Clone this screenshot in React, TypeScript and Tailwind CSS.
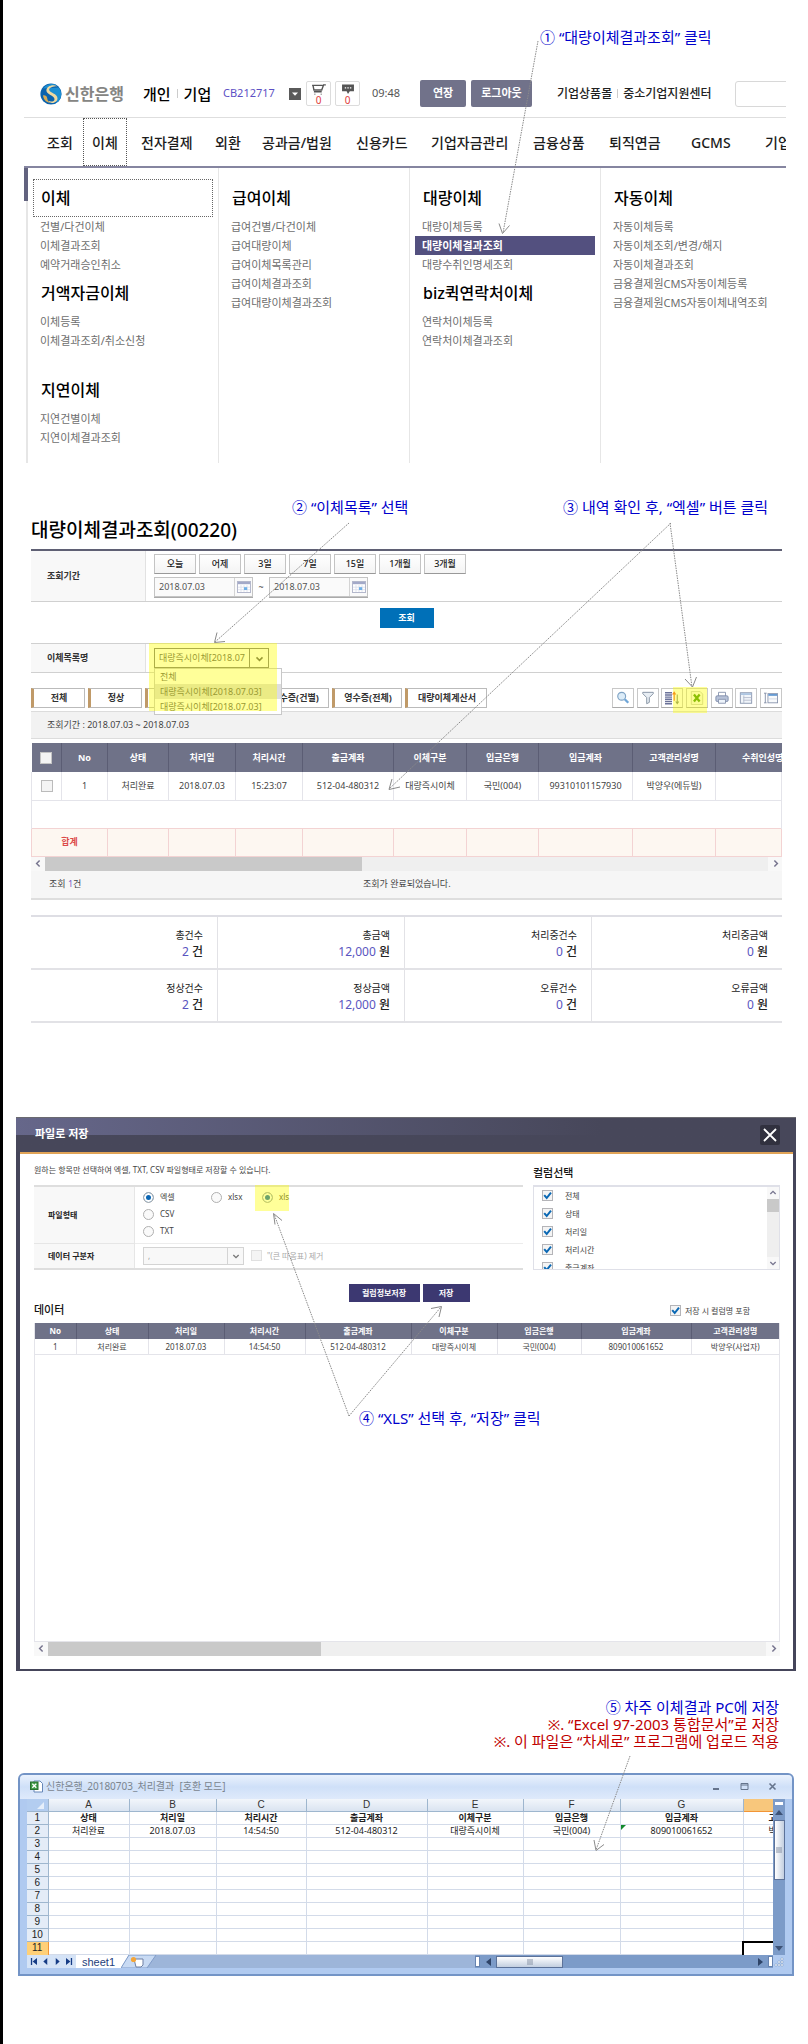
import type { ReactNode } from "react";

const menuColumns: { title: string; boxed?: boolean; items: string[]; active?: string }[][] = [
  [
    { title: "이체", boxed: true, items: ["건별/다건이체", "이체결과조회", "예약거래승인취소"] },
    { title: "거액자금이체", items: ["이체등록", "이체결과조회/취소신청"] },
    { title: "지연이체", items: ["지연건별이체", "지연이체결과조회"] },
  ],
  [
    {
      title: "급여이체",
      items: ["급여건별/다건이체", "급여대량이체", "급여이체목록관리", "급여이체결과조회", "급여대량이체결과조회"],
    },
  ],
  [
    { title: "대량이체", items: ["대량이체등록", "대량이체결과조회", "대량수취인명세조회"], active: "대량이체결과조회" },
    { title: "biz퀵연락처이체", items: ["연락처이체등록", "연락처이체결과조회"] },
  ],
  [
    {
      title: "자동이체",
      items: ["자동이체등록", "자동이체조회/변경/해지", "자동이체결과조회", "금융결제원CMS자동이체등록", "금융결제원CMS자동이체내역조회"],
    },
  ],
];

const navItems = ["조회", "이체", "전자결제", "외환", "공과금/법원", "신용카드", "기업자금관리", "금융상품", "퇴직연금", "GCMS", "기업"];

function Step({ n, children }: { n: string; children: ReactNode }) {
  return (
    <p className="text-[15px] leading-5 whitespace-nowrap text-[#0000cc]">
      {n} {children}
    </p>
  );
}

function Chevron({ dir, className }: { dir: "left" | "right" | "up" | "down"; className: string }) {
  const d = {
    left: "M7.5 2 3.5 6l4 4",
    right: "M4.5 2l4 4-4 4",
    up: "M2 7.5l4-4 4 4",
    down: "M2 4.5l4 4 4-4",
  }[dir];
  return (
    <svg viewBox="0 0 12 12" className={className} fill="none" stroke="currentColor" strokeWidth="2" aria-hidden="true">
      <path d={d} />
    </svg>
  );
}

function Check({ label, className, textClass }: { label: string; className: string; textClass: string }) {
  return (
    <label className={className}>
      <span className="relative block size-[11px] shrink-0">
        <input type="checkbox" defaultChecked className="block size-[11px] appearance-none border border-[#b4b4b8] bg-[#f4f4f4]" />
        <svg viewBox="0 0 11 11" className="pointer-events-none absolute inset-0 size-[11px]" fill="none" stroke="#0a68b4" strokeWidth="2" aria-hidden="true">
          <path d="M2.2 5.2 4.7 8 9 2.6" />
        </svg>
      </span>
      <span className={textClass}>{label}</span>
    </label>
  );
}

function Radio({ label, name, checked }: { label: string; name: string; checked?: boolean }) {
  return (
    <label className="flex h-[17px] items-center gap-[6px]">
      <input
        type="radio"
        name={name}
        defaultChecked={checked}
        className="size-[11px] appearance-none rounded-full border border-[#b0b0b0] bg-[#fafafa] checked:bg-[#0a66b4] checked:shadow-[inset_0_0_0_2px_white]"
      />
      <span>{label}</span>
    </label>
  );
}

function HScroll({ thumb }: { thumb: string }) {
  return (
    <div className="flex h-[14px] bg-[#efefef] text-[#77758f]">
      <span className="grid w-[14px] place-items-center bg-[#f8f8f8]">
        <Chevron dir="left" className="size-[9px]" />
      </span>
      <span className={thumb} />
      <span className="ml-auto grid w-[14px] place-items-center bg-[#f8f8f8]">
        <Chevron dir="right" className="size-[9px]" />
      </span>
    </div>
  );
}

function DateField({ label }: { label: string }) {
  return (
    <div className="flex h-5 w-[99px] border border-[#c4c4c4] bg-[#fafafa] shadow-[0_1px_0_#aaa]">
      <input aria-label={label} defaultValue="2018.07.03" className="w-[79px] min-w-0 bg-transparent pl-1 text-[9px] text-[#555] outline-none" />
      <span className="grid flex-1 place-items-center border-l border-[#d4d4d4] bg-[#fafafa]">
        <svg viewBox="0 0 14 12" className="h-3 w-[14px]" aria-hidden="true">
          <rect x=".5" y=".5" width="13" height="11" fill="#fff" stroke="#b4b8cc" />
          <rect x="1" y="1" width="12" height="2.2" fill="#a3a9c8" />
          <path d="M4 4v7M7 4v7M10 4v7M1 6.2h12M1 8.7h12" stroke="#d5dae8" strokeWidth=".7" />
          <rect x="7" y="6.2" width="3.200" height="2.800" fill="#6fb0e6" />
        </svg>
      </span>
    </div>
  );
}

function Header() {
  return (
    <header className="mt-[33px] mr-[22px] ml-[21px] overflow-hidden">
      <div className="grid grid-cols-[103px_80px_66px_83px_48px_137px_178px_1fr] items-center border-b border-[#dedede] pb-[10px] pl-4 whitespace-nowrap">
        <a href="#home" className="flex items-center gap-[3px]">
          <svg viewBox="0 0 22 22" className="size-[22px]" aria-hidden="true">
            <circle cx="11" cy="11" r="10.6" fill="#0b62ad" />
            <path d="M3 5.500A10.600 10.600 0 0 1 17 2.300C12 1.500 7 5 9 8.500c2 3 8 4 8 8.200 0 2-1.500 3.600-3 4.300 8-2.500 9-12 4.500-16.500" fill="#1c8fd3" />
            <path d="M17.200 3.200C12.500.8 6.300 3.500 6.400 7.500c.1 4.300 7.800 4.800 8.100 8.400.2 2.600-3.600 3.500-6.200 1.900 1.500 3.600 9 2.600 9.200-2.300.2-5-8.200-5.500-8.400-8.700-.1-2.300 4.400-3.700 8.100-3.600z" fill="#f0d9a0" />
            <path d="M3 12.500c2-.6 4 .8 4.200 2.800.3 2 1.200 3.600 3.400 4.600-3.700-.2-6.800-2.600-7.600-7.400z" fill="#d9ab55" />
          </svg>
          <span className="text-[16px] leading-5 font-bold text-[#858583]">신한은행</span>
        </a>
        <div className="flex items-center gap-[6px] text-[15px] leading-5 font-medium text-black">
          <a href="#personal">개인</a>
          <span className="h-[9px] w-px bg-[#ccc]" />
          <a href="#corporate">기업</a>
        </div>
        <span className="text-[11px] text-[#5c50c4]">CB212717</span>
        <div className="flex items-center">
          <button aria-label="계정 메뉴" className="mr-[5px] grid size-3 place-items-center bg-[#5a5a5a]">
            <svg viewBox="0 0 8 8" className="size-2" aria-hidden="true"><path d="M1 2.500h6L4 5.800z" fill="#fff" /></svg>
          </button>
          <button className="mr-1 flex h-[25px] w-[25px] flex-col items-center rounded-[2px] border border-[#dcdcdc] pt-[2px] text-[10px] leading-[10px] text-[#e03c3c]">
            <svg viewBox="0 0 16 12" className="h-[11px] w-[15px] shrink-0" fill="none" stroke="#555" strokeWidth="1.500" aria-hidden="true">
              <path d="M1 1.500h11.500M2 1.500l1 5h8.500L13.500 1H16M3 8.500h8.500M4 10.500v1M11 10.500v1" />
            </svg>
            0
          </button>
          <button className="flex h-[25px] w-[25px] flex-col items-center rounded-[2px] border border-[#dcdcdc] pt-[2px] text-[10px] leading-[10px] text-[#e03c3c]">
            <svg viewBox="0 0 15 12" className="h-[11px] w-[14px] shrink-0" aria-hidden="true">
              <path d="M1 .5h13v7.500H9.500L7.500 11 6 8H1z" fill="#555" />
              <path d="M4 3.500h1.500v1.500H4zM6.800 3.500h1.500v1.500H6.800zM9.600 3.500h1.500v1.500H9.600z" fill="#fff" />
            </svg>
            0
          </button>
        </div>
        <time className="text-[11px] text-[#555]">09:48</time>
        <div className="flex gap-[5px] text-[11px] font-bold text-white">
          <button className="h-[27px] w-[46px] rounded-[2px] bg-[#71728a]">연장</button>
          <button className="h-[27px] w-[61px] rounded-[2px] bg-[#71728a]">로그아웃</button>
        </div>
        <div className="flex items-center gap-[5px] text-[12px] font-medium text-[#222]">
          <a href="#mall">기업상품몰</a>
          <span className="h-[9px] w-px bg-[#ccc]" />
          <a href="#support">중소기업지원센터</a>
        </div>
        <input aria-label="검색" className="h-[26px] w-[120px] rounded-[3px] border border-[#d8d8d8] bg-white outline-none" />
      </div>
      <nav className="grid grid-cols-[45px_49px_74px_47px_94px_75px_102px_76px_82px_74px_1fr] border-b-2 border-[#8585a0] pl-[14px] text-[14px] font-medium whitespace-nowrap text-[#1c1c1c]">
        {navItems.map((item) => (
          <a
            key={item}
            href="#menu"
            className={
              item === "이체"
                ? "flex h-12 items-center justify-self-start border border-dotted border-[#555] px-2"
                : "flex h-12 items-center justify-self-start border border-transparent px-2"
            }
          >
            {item}
          </a>
        ))}
      </nav>
      <div className="flex min-h-[295px]">
        <div className="flex w-1 shrink-0 flex-col">
          <span className="h-[33px] bg-[#62637f]" />
          <span className="ml-[2px] flex-1 bg-[#e6e6e6]" />
        </div>
        <div className="grid flex-1 grid-cols-[191px_191px_191px_1fr]">
          {menuColumns.map((groups, i) => (
            <div key={i} className="border-r border-[#e6e6e6] px-[5px] pt-[11px] last:border-r-0">
              {groups.map((g, j) => (
                <section key={g.title} className={j === 2 ? "mt-[21px]" : ""}>
                  <h2
                    className={
                      g.boxed
                        ? "flex h-[38px] items-center border border-dotted border-[#666] px-[7px] text-[16px] font-medium text-black"
                        : "flex h-[38px] items-center border border-transparent px-[7px] text-[16px] font-medium whitespace-nowrap text-black"
                    }
                  >
                    {g.title}
                  </h2>
                  <ul>
                    {g.items.map((item) => (
                      <li key={item}>
                        <a
                          href="#item"
                          className={
                            item === g.active
                              ? "block h-[19px] bg-[#53507f] px-[7px] text-[11px] leading-[19px] font-bold whitespace-nowrap text-white"
                              : "block h-[19px] px-[7px] text-[11px] leading-[19px] whitespace-nowrap text-[#6e6e6e]"
                          }
                        >
                          {item}
                        </a>
                      </li>
                    ))}
                  </ul>
                </section>
              ))}
            </div>
          ))}
        </div>
      </div>
    </header>
  );
}

const toolIcons: { label: string; art: ReactNode }[] = [
  {
    label: "검색",
    art: (
      <>
        <circle cx="6.500" cy="6" r="4.500" fill="#dcecf8" stroke="#7fa3c4" strokeWidth="1.300" />
        <path d="M10 9.500l4 4" stroke="#6fa6d8" strokeWidth="2.600" />
      </>
    ),
  },
  { label: "필터", art: <path d="M2 1.500h12v1.500L9.500 7.500V13l-3 1.500v-7L2 3z" fill="#e8eef4" stroke="#7d8a9c" /> },
  {
    label: "정렬",
    art: (
      <>
        <path d="M0 2h8M0 4.500h8M0 7h8M0 9.500h8M0 12h8M0 14.500h8" stroke="#6b7299" strokeWidth="1.600" />
        <path d="M10.500 11V2M8.800 4l1.700-2.500L12.200 4" stroke="#ee5a2a" strokeWidth="1.300" fill="none" />
        <path d="M14 4v10M12.300 12l1.700 2.500 1.700-2.500" stroke="#7b8670" strokeWidth="1.200" fill="none" />
      </>
    ),
  },
  {
    label: "엑셀",
    art: (
      <>
        <path d="M1.500.5h10l3 3v12h-13z" fill="#f8faf4" stroke="#c2c9b8" />
        <path d="M4.500 4l6.500 8M11 4l-6.500 8" stroke="#3f9408" strokeWidth="2.600" />
      </>
    ),
  },
  {
    label: "인쇄",
    art: (
      <>
        <path d="M4 6V1.500h8V6" fill="#fff" stroke="#8591ab" />
        <rect x="1" y="5.500" width="14" height="6.500" rx="1.500" fill="#b7c2d8" stroke="#7b89a8" />
        <path d="M4 9.500h8v4.500H4z" fill="#eef4fb" stroke="#8591ab" />
      </>
    ),
  },
  {
    label: "표",
    art: (
      <>
        <rect x="1.500" y="2" width="13" height="12" fill="#f1f5fa" stroke="#8591ab" />
        <path d="M2 3.500h12" stroke="#a9c3e0" strokeWidth="2" />
        <path d="M5.500 5v9M5 7.500h9M5 10.500h9" stroke="#b4bccd" />
      </>
    ),
  },
  {
    label: "열 고정",
    art: (
      <>
        <path d="M0 2.500h3M0 13.500h3M1.500 2.500v11" stroke="#7f8aa4" />
        <rect x="4.500" y="3" width="11" height="10.500" fill="#f8fafc" stroke="#8591ab" />
        <path d="M5 4.500h10" stroke="#5d95d0" strokeWidth="2" />
        <path d="M5 9h10" stroke="#d0d6e0" />
      </>
    ),
  },
];

const listCols = ["w-[30px]", "w-[46px]", "w-[61px]", "w-[67px]", "w-[67px]", "w-[91px]", "w-[73px]", "w-[72px]", "w-[94px]", "w-[83px]", ""];
const listHead = ["No", "상태", "처리일", "처리시간", "출금계좌", "이체구분", "입금은행", "입금계좌", "고객관리성명"];
const listRow = ["1", "처리완료", "2018.07.03", "15:23:07", "512-04-480312", "대량즉시이체", "국민(004)", "99310101157930", "박양우(에듀빌)"];

const summary = [
  ["총건수", "2", "건"],
  ["총금액", "12,000", "원"],
  ["처리중건수", "0", "건"],
  ["처리중금액", "0", "원"],
  ["정상건수", "2", "건"],
  ["정상금액", "12,000", "원"],
  ["오류건수", "0", "건"],
  ["오류금액", "0", "원"],
];

function ResultPage() {
  return (
    <main className="mr-[26px] ml-7 text-[9px] whitespace-nowrap text-[#444]">
      <h1 className="text-[19px] leading-[26px] font-medium text-black">대량이체결과조회(00220)</h1>
      <section className="mt-[6px] grid grid-cols-[115px_1fr] border-t-2 border-b border-t-[#5f6074] border-b-[#d0d0d0]">
        <div className="flex items-center border-r border-[#e2e2e2] bg-[#f8f8f8] pl-4 font-bold text-[#333]">조회기간</div>
        <div className="flex flex-col gap-[3px] pt-[3px] pb-1 pl-2">
          <div className="flex gap-[3px]">
            {["오늘", "어제", "3일", "7일", "15일", "1개월", "3개월"].map((t) => (
              <button key={t} className="h-5 w-[42px] border border-[#c4c4c4] border-b-[#999] bg-linear-to-b from-white to-[#f4f4f4] font-medium text-[#222]">
                {t}
              </button>
            ))}
          </div>
          <div className="flex items-center">
            <DateField label="시작일" />
            <span className="w-4 text-center">~</span>
            <DateField label="종료일" />
          </div>
        </div>
      </section>
      <button className="mx-auto mt-[6px] block h-5 w-[54px] bg-[#0070b8] font-bold text-white">조회</button>
      <section className="mt-[15px] grid grid-cols-[115px_1fr] border-y border-[#d0d0d0]">
        <label htmlFor="list" className="flex items-center border-r border-[#e2e2e2] bg-[#f8f8f8] pl-4 font-bold text-[#333]">
          이체목록명
        </label>
        <div className="h-7 py-1 pl-2">
          <div className="relative h-5 w-[115px]">
            <select id="list" className="block h-5 w-[115px] appearance-none border border-[#777] bg-white pr-[23px] pl-1 text-[9px] text-[#555] outline-none">
              <option>대량즉시이체[2018.07.03]</option>
            </select>
            <span className="pointer-events-none absolute top-0 right-0 grid h-5 w-5 place-items-center border border-[#777] text-[#555]">
              <Chevron dir="down" className="size-[9px]" />
            </span>
            <ul className="absolute top-5 left-0 z-10 w-32 border border-[#c8c8c8] bg-white text-[#555]">
              <li className="h-[15px] pl-[5px] leading-[15px]">전체</li>
              <li className="h-[15px] bg-[#dedede] pl-[5px] leading-[15px]">대량즉시이체[2018.07.03]</li>
              <li className="h-[15px] pl-[5px] leading-[15px]">대량즉시이체[2018.07.03]</li>
            </ul>
            <div className="pointer-events-none absolute -top-[5px] -left-[5px] z-20 h-[68px] w-32 bg-[#ffff00]/40" />
          </div>
        </div>
      </section>
      <div className="mt-[15px] flex items-center justify-between">
        <div className="flex gap-[3px] font-bold text-[#333]">
          <button className="h-5 w-[54px] border border-l-3 border-[#bbb] border-l-[#c09a68]">전체</button>
          <button className="h-5 w-[54px] border border-l-3 border-[#bbb] border-l-[#c09a68]">정상</button>
          <button aria-label="오류" className="h-5 w-[54px] border border-l-3 border-[#bbb] border-l-[#c09a68]" />
          <button aria-label="처리중" className="h-5 w-[54px] border border-l-3 border-[#bbb] border-l-[#c09a68]" />
          <button className="h-5 w-[70px] border border-l-3 border-[#bbb] border-l-[#c09a68]">영수증(건별)</button>
          <button className="h-5 w-[70px] border border-l-3 border-[#bbb] border-l-[#c09a68]">영수증(전체)</button>
          <button className="h-5 w-[82px] border border-l-3 border-[#bbb] border-l-[#c09a68]">대량이체계산서</button>
        </div>
        <div className="relative flex w-[170px] justify-between">
          {toolIcons.map((t) => (
            <button key={t.label} aria-label={t.label} className="grid h-5 w-[22px] place-items-center border border-[#c8c8c8] border-b-[#aaa] bg-white">
              <svg viewBox="0 0 16 16" className="size-[14px]" fill="none" aria-hidden="true">{t.art}</svg>
            </button>
          ))}
          <div className="pointer-events-none absolute -top-px left-[61px] z-10 h-[26px] w-[34px] bg-[#ffff00]/40" />
        </div>
      </div>
      <p className="mt-[3px] h-7 border-y border-[#dcdcdc] bg-[#f2f2f2] pl-4 leading-[26px]">조회기간 : 2018.07.03 ~ 2018.07.03</p>
      <table className="mt-1 w-full table-fixed border-collapse text-center">
        <colgroup>{listCols.map((c, i) => <col key={i} className={c} />)}</colgroup>
        <thead>
          <tr className="h-[29px] bg-[#6f7288] text-white">
            <th className="border-r border-[#5b5d74] p-0">
              <input type="checkbox" aria-label="전체 선택" className="mx-auto block size-3 appearance-none border border-[#c4c4c4] bg-[#f4f4f4]" />
            </th>
            {listHead.map((h) => <th key={h} className="border-r border-[#5b5d74] p-0 font-bold">{h}</th>)}
            <th className="overflow-hidden p-0 pl-[26px] text-left font-bold">수취인성명</th>
          </tr>
        </thead>
        <tbody>
          <tr className="h-7 border-b border-[#e4e4ea]">
            <td className="border-x border-[#e4e4ea] p-0">
              <input type="checkbox" aria-label="1번 선택" className="mx-auto block size-3 appearance-none border border-[#bbb] bg-[#f4f4f4]" />
            </td>
            {listRow.map((v) => <td key={v} className="border-r border-[#e4e4ea] p-0">{v}</td>)}
            <td className="border-r border-[#e4e4ea]" />
          </tr>
          <tr className="h-7 border-b border-[#e4e4ea]">
            <td colSpan={11} className="border-x border-[#e4e4ea]" />
          </tr>
          <tr className="h-7 bg-[#fdf7f1]">
            <td colSpan={2} className="border border-[#f3d3d3] p-0 font-bold text-[#dc4a4a]">합계</td>
            {listRow.map((v) => <td key={v} className="border border-[#f3d3d3]" />)}
          </tr>
        </tbody>
      </table>
      <HScroll thumb="w-[317px] bg-[#c9c9c9]" />
      <div className="grid h-[29px] grid-cols-[314px_1fr] items-center border-b-2 border-[#dedede] bg-[#f6f6f6] pl-[18px]">
        <span>조회 <span className="text-[#7a5cc8]">1</span>건</span>
        <span>조회가 완료되었습니다.</span>
      </div>
      <dl className="mt-[15px] grid grid-cols-[187px_187px_187px_1fr] border-t-2 border-[#dedee4]">
        {summary.map(([label, value, unit]) => (
          <div key={label} className="h-[53px] border-r border-b-2 border-[#e2e2e6] pt-[10px] pr-[14px] text-right nth-[4n]:border-r-0">
            <dt className="text-[10px] leading-4 text-[#222]">{label}</dt>
            <dd className="text-[12px] leading-[18px] font-medium text-[#222]">
              <span className="font-normal text-[#5a55c0]">{value}</span> {unit}
            </dd>
          </div>
        ))}
      </dl>
    </main>
  );
}

const saveCols = ["w-[41px]", "w-[72px]", "w-[76px]", "w-[81px]", "w-[106px]", "w-[86px]", "w-[84px]", "w-[110px]", ""];
const saveRow = ["1", "처리완료", "2018.07.03", "14:54:50", "512-04-480312", "대량즉시이체", "국민(004)", "809010061652", "박양우(사업자)"];

function SaveDialog() {
  return (
    <section className="mt-[94px] mr-3 ml-[13px] text-[8px] whitespace-nowrap text-[#444]">
      <header className="border-t border-[#6a6a70] bg-linear-to-r from-[#66678a] to-[#47475a] to-75%">
        <div className="flex h-[34px] items-center justify-between bg-linear-to-b from-transparent from-50% to-[#47475a] to-50% pr-4 pl-[19px]">
          <h2 className="text-[11px] font-bold text-white">파일로 저장</h2>
          <button aria-label="닫기" className="grid size-5 place-items-center rounded-[2px] bg-[#31313f]">
            <svg viewBox="0 0 20 20" className="size-5" stroke="#fff" strokeWidth="1.800" aria-hidden="true"><path d="M4 4l12 12M16 4L4 16" /></svg>
          </button>
        </div>
      </header>
      <div className="border-r-3 border-b-2 border-l-4 border-[#45455a]">
        <div className="border-t-2 border-[#e0a356] pr-[13px] pb-[13px] pl-[14px]">
          <div className="grid grid-cols-[1fr_247px] gap-[10px]">
            <div>
              <p className="flex h-[31px] items-center pt-[2px]">원하는 항목만 선택하여 엑셀, TXT, CSV 파일형태로 저장할 수 있습니다.</p>
              <div className="grid grid-cols-[101px_1fr] border-y-2 border-[#dedede]">
                <div className="flex items-center border-r border-b border-[#e6e6e6] bg-[#f8f8f8] pl-[14px] font-bold text-[#222]">파일형태</div>
                <div className="h-[57px] border-b border-[#ececec] pt-[2px] pl-2">
                  <div className="grid grid-cols-[68px_51px_1fr]">
                    <Radio label="엑셀" name="format" checked />
                    <Radio label="xlsx" name="excel" />
                    <div className="relative">
                      <Radio label="xls" name="excel" checked />
                      <div className="pointer-events-none absolute -top-[4px] -left-[7px] h-[26px] w-[34px] bg-[#ffff00]/40" />
                    </div>
                  </div>
                  <Radio label="CSV" name="format" />
                  <Radio label="TXT" name="format" />
                </div>
                <label htmlFor="sep" className="flex items-center border-r border-[#e6e6e6] bg-[#f8f8f8] pl-[14px] font-bold text-[#222]">
                  데이터 구분자
                </label>
                <div className="flex h-6 items-center gap-[7px] pl-2">
                  <div className="relative">
                    <select id="sep" disabled className="block h-[18px] w-[101px] appearance-none border border-[#d4d4d4] bg-[#f8f8f8] pl-1 text-[8px] text-[#999] opacity-100">
                      <option>,</option>
                    </select>
                    <span className="pointer-events-none absolute top-0 right-0 grid h-[18px] w-[17px] place-items-center border border-[#d4d4d4] text-[#777]">
                      <Chevron dir="down" className="size-2" />
                    </span>
                  </div>
                  <label className="flex items-center gap-[5px] text-[#aaa]">
                    <input type="checkbox" disabled className="size-[11px] appearance-none border border-[#e0e0e0] bg-[#f4f4f4]" />
                    <span>"(큰 따옴표) 제거</span>
                  </label>
                </div>
              </div>
            </div>
            <div>
              <h3 className="flex h-[31px] items-center pt-2 text-[11px] font-medium text-[#111]">컬럼선택</h3>
              <div className="flex h-[85px] overflow-hidden border border-t-2 border-[#dfe0e8]">
                <div className="flex-1 pl-2">
                  {["전체", "상태", "처리일", "처리시간", "출금계좌"].map((c) => (
                    <Check key={c} label={c} className="flex h-[18px] items-center gap-3" textClass="leading-[18px]" />
                  ))}
                </div>
                <div className="flex w-3 flex-col items-center bg-[#efefef] text-[#77758f]">
                  <span className="grid h-3 w-full place-items-center bg-[#f8f8f8]"><Chevron dir="up" className="size-2" /></span>
                  <span className="h-[13px] w-full bg-[#c9c9c9]" />
                  <span className="mt-auto grid h-3 w-full place-items-center bg-[#f8f8f8]"><Chevron dir="down" className="size-2" /></span>
                </div>
              </div>
            </div>
          </div>
          <div className="mt-[14px] flex justify-center gap-[3px] pl-1 font-bold text-white">
            <button className="h-[18px] w-[71px] bg-[#3c3871]">컬럼정보저장</button>
            <button className="h-[18px] w-[47px] bg-[#3c3871]">저장</button>
          </div>
          <div className="flex h-[21px] items-center justify-between pr-[30px] pb-[3px]">
            <h3 className="text-[11px] font-medium text-[#111]">데이터</h3>
            <Check label="저장 시 컬럼명 포함" className="flex items-center gap-1" textClass="" />
          </div>
          <div className="h-[319px] border-x border-b border-[#e4e4ea]">
            <table className="w-full table-fixed border-collapse text-center">
              <colgroup>{saveCols.map((c, i) => <col key={i} className={c} />)}</colgroup>
              <thead>
                <tr className="h-4 bg-[#6f7288] text-white">
                  {listHead.map((h) => <th key={h} className="border-r border-[#5b5d74] p-0 leading-[15px] font-bold last:border-r-0">{h}</th>)}
                </tr>
              </thead>
              <tbody>
                <tr className="h-4 border-b border-[#e4e4ea]">
                  {saveRow.map((v) => <td key={v} className="border-r border-[#e4e4ea] p-0 leading-[15px] last:border-r-0">{v}</td>)}
                </tr>
              </tbody>
            </table>
            <div className="pt-[53px] pl-[324px]">
              <Step n="④">“XLS” 선택 후, “저장” 클릭</Step>
            </div>
          </div>
          <HScroll thumb="w-[273px] bg-[#c9c9c9]" />
        </div>
      </div>
    </section>
  );
}

const sheetCols = ["w-[21px]", "w-[81px]", "w-[87px]", "w-[90px]", "w-[121px]", "w-[96px]", "w-[97px]", "w-[123px]", ""];
const sheetHead = ["상태", "처리일", "처리시간", "출금계좌", "이체구분", "입금은행", "입금계좌"];
const sheetRow = ["처리완료", "2018.07.03", "14:54:50", "512-04-480312", "대량즉시이체", "국민(004)", "809010061652"];

function Workbook() {
  return (
    <section className="mt-[23px] mr-[14px] ml-[15px] overflow-hidden rounded-t-md border-2 border-[#7394c6] bg-[#b0caf0] whitespace-nowrap">
      <header className="flex h-6 items-center bg-linear-to-b from-[#eaf2fd] via-[#cfe0f8] to-[#dfeafb] pr-[15px] pl-[10px]">
        <svg viewBox="0 0 13 13" className="size-[13px]" aria-hidden="true">
          <path d="M4 1h6l2.500 2.500V12H4z" fill="#fff" stroke="#6687b8" />
          <rect x=".5" y="2" width="7.500" height="7.500" fill="#3f9a45" stroke="#2a7030" />
          <path d="M2.300 3.700l4 4M6.300 3.700l-4 4" stroke="#fff" strokeWidth="1.300" />
        </svg>
        <h2 className="ml-[3px] text-[10px] text-[#7b858f]">신한은행_20180703_처리결과&nbsp; [호환 모드]</h2>
        <div className="ml-auto flex items-center gap-[19px] text-[#65748c]">
          <button aria-label="최소화"><svg viewBox="0 0 9 9" className="size-[9px]"><path d="M1 7h6" stroke="currentColor" strokeWidth="2" /></svg></button>
          <button aria-label="최대화"><svg viewBox="0 0 9 9" className="size-[9px]" fill="none" stroke="currentColor"><path d="M1 1.500h7v6H1zM1 3h7" /></svg></button>
          <button aria-label="통합 문서 닫기"><svg viewBox="0 0 9 9" className="size-[9px]" stroke="currentColor" strokeWidth="1.600"><path d="M1.500 1.500l6 6M7.500 1.500l-6 6" /></svg></button>
        </div>
      </header>
      <div className="mr-[7px] ml-[7px] flex">
        <div className="min-w-0 flex-1 bg-white">
          <table className="w-full table-fixed border-collapse text-center text-[9px] text-[#222]">
            <colgroup>{sheetCols.map((c, i) => <col key={i} className={c} />)}</colgroup>
            <thead>
              <tr className="h-[13px] bg-linear-to-b from-[#f2f6fb] to-[#d8e2f0] font-['Liberation_Sans',Arial,sans-serif] text-[10px] leading-[12px] text-[#333]">
                <th className="border-r border-b border-[#9eb6ce] bg-[#b3cdf0] p-0">
                  <svg viewBox="0 0 20 12" className="block h-3 w-5" aria-hidden="true"><path d="M17 3v7h-7z" fill="#e6effa" /></svg>
                </th>
                {["A", "B", "C", "D", "E", "F", "G"].map((c) => (
                  <th key={c} className="border-r border-b border-[#9eb6ce] p-0 font-normal">{c}</th>
                ))}
                <th className="border-b border-[#f29536] bg-[#f8c77c] p-0" />
              </tr>
            </thead>
            <tbody>
              {[1, 2, 3, 4, 5, 6, 7, 8, 9, 10, 11].map((r) => (
                <tr key={r} className="h-[13px] leading-[12px]">
                  <th
                    className={
                      r === 11
                        ? "border-r border-[#f29536] bg-[#ffd078] p-0 font-['Liberation_Sans',Arial,sans-serif] text-[10px] font-normal"
                        : "border-r border-b border-[#9eb6ce] bg-[#e4ecf7] p-0 font-['Liberation_Sans',Arial,sans-serif] text-[10px] font-normal"
                    }
                  >
                    {r}
                  </th>
                  {sheetRow.map((v, c) => (
                    <td key={c} className={r === 1 ? "border-r border-b border-[#d3dbe9] p-0 font-bold" : "relative border-r border-b border-[#d3dbe9] p-0"}>
                      {r === 1 ? sheetHead[c] : r === 2 ? v : ""}
                      {r === 2 && c === 6 && (
                        <svg viewBox="0 0 5 5" className="absolute top-0 left-0 size-[5px]" aria-hidden="true"><path d="M0 0h5L0 5z" fill="#128a2c" /></svg>
                      )}
                    </td>
                  ))}
                  <td
                    className={
                      r === 11
                        ? "border-t-2 border-l-2 border-black p-0"
                        : r === 1
                          ? "overflow-hidden border-b border-[#d3dbe9] p-0 pl-[25px] text-left font-bold"
                          : "overflow-hidden border-b border-[#d3dbe9] p-0 pl-[25px] text-left"
                    }
                  >
                    {r === 1 ? "고" : r === 2 ? "박" : ""}
                  </td>
                </tr>
              ))}
            </tbody>
          </table>
        </div>
        <div className="flex w-3 flex-col items-center bg-[#7c9bc8] text-[#3d5276]">
          <span className="mt-[2px] h-[5px] w-[10px] border border-[#7c9bc8] bg-white" />
          <svg viewBox="0 0 8 5" className="mt-[4px] h-[5px] w-2" aria-hidden="true"><path d="M0 5h8L4 0z" fill="currentColor" /></svg>
          <span className="mt-[5px] grid h-[60px] w-[11px] place-items-center border border-[#5c7299] bg-linear-to-r from-white to-[#c3cfe0]">
            <svg viewBox="0 0 6 6" className="size-[6px]" stroke="#8792a5"><path d="M0 1h6M0 3h6M0 5h6" /></svg>
          </span>
          <svg viewBox="0 0 8 5" className="mt-auto mb-1 h-[5px] w-2" aria-hidden="true"><path d="M0 0h8L4 5z" fill="currentColor" /></svg>
        </div>
      </div>
      <div className="mr-[7px] mb-[6px] ml-[7px] flex h-[13px] items-center bg-[#9db5d9]">
        <div className="flex h-full w-[49px] items-center justify-around bg-[#d5e3f6] text-[#163c86]">
          <svg viewBox="0 0 8 8" className="size-[7px]" fill="currentColor"><path d="M1 0h1.500v8H1zM8 0v8L3 4z" /></svg>
          <svg viewBox="0 0 8 8" className="size-[7px]" fill="currentColor"><path d="M6 0v8L1.500 4z" /></svg>
          <svg viewBox="0 0 8 8" className="size-[7px]" fill="currentColor"><path d="M2 0v8l4.500-4z" /></svg>
          <svg viewBox="0 0 8 8" className="size-[7px]" fill="currentColor"><path d="M5.500 0H7v8H5.500zM0 0v8l5-4z" /></svg>
        </div>
        <button className="h-full w-[45px] bg-white font-['Liberation_Sans',Arial,sans-serif] text-[11px] leading-3 text-[#24407a]">sheet1</button>
        <svg viewBox="0 0 36 13" className="h-[13px] w-9" aria-hidden="true">
          <path d="M0 0h8L0 13z" fill="#fff" />
          <path d="M8 0h27L26 13H0z" fill="#c8daf3" stroke="#7f9bc8" />
          <path d="M13 4h9v6l-2 2h-5z" fill="#fff" stroke="#6d7fa3" />
          <circle cx="12.500" cy="4.500" r="2.600" fill="#f3a53a" />
        </svg>
        <div className="ml-auto flex h-full w-[298px] items-center bg-[#7c9bc8] text-[#2f4468]">
          <span className="h-[11px] w-[5px] border border-[#6683b0] bg-white" />
          <svg viewBox="0 0 5 8" className="ml-[6px] h-2 w-[5px]" aria-hidden="true"><path d="M5 0v8L0 4z" fill="currentColor" /></svg>
          <span className="ml-[5px] grid h-3 w-[67px] place-items-center border border-[#5c7299] bg-linear-to-b from-white to-[#c3cfe0]">
            <svg viewBox="0 0 6 6" className="size-[6px]" stroke="#8792a5"><path d="M1 0v6M3 0v6M5 0v6" /></svg>
          </span>
          <svg viewBox="0 0 5 8" className="mr-[5px] ml-auto h-2 w-[5px]" aria-hidden="true"><path d="M0 0v8l5-4z" fill="currentColor" /></svg>
          <span className="h-[11px] w-[5px] border border-[#6683b0] bg-white" />
        </div>
        <svg viewBox="0 0 12 13" className="h-[13px] w-3 bg-[#b0caf0]" aria-hidden="true">
          <path d="M8 3h2v2H8zM5 6h2v2H5zM8 6h2v2H8zM2 9h2v2H2zM5 9h2v2H5zM8 9h2v2H8z" fill="#fff" stroke="#7f98c2" strokeWidth=".5" />
        </svg>
      </div>
    </section>
  );
}

function Arrows() {
  return (
    <svg width="808" height="2044" viewBox="0 0 808 2044" className="pointer-events-none absolute top-0 -left-[3px] z-30" fill="none" stroke="#8a8a8a" aria-hidden="true">
      <g strokeDasharray="1.500 1">
        <path d="M538 41 503 233" />
        <path d="M349 523 215 642" />
        <path d="M671 523 389 789" />
        <path d="M670 523 692 687" />
        <path d="M349 1416 274 1214" />
        <path d="M349 1416 441 1307" />
        <path d="M630 1756 596 1850" />
      </g>
      <path d="M499 223.500 502.500 233.500 509.500 225.500" />
      <path d="M217 632.500 214.500 642.500 225 641.500" />
      <path d="M392 779 389 789.500 400 787" />
      <path d="M685 679 692.500 687 696.500 677" />
      <path d="M275 1224.500 273.500 1213.500 282 1220.500" />
      <path d="M431 1308.500 441.500 1306.500 439 1317" />
      <path d="M594 1840 596 1850.500 604 1844.500" />
    </svg>
  );
}

export default function App() {
  return (
    <div className="relative min-h-screen overflow-hidden border-l-3 border-black bg-white pt-[27px] pb-[60px] font-['Noto_Sans','Noto_Sans_CJK_KR',sans-serif]">
      <div className="pl-[537px]">
        <Step n="①">“대량이체결과조회” 클릭</Step>
      </div>
      <Header />
      <div className="mt-[34px] grid grid-cols-[271px_1fr] pl-[289px]">
        <Step n="②">“이체목록” 선택</Step>
        <Step n="③">내역 확인 후, “엑셀” 버튼 클릭</Step>
      </div>
      <ResultPage />
      <SaveDialog />
      <div className="mt-7 mr-[29px] text-right text-[15px] leading-[17px] text-[#c00000]">
        <p className="text-[#0000cc]">⑤ 차주 이체결과 PC에 저장</p>
        <p>※. “Excel 97-2003 통합문서”로 저장</p>
        <p>※. 이 파일은 “차세로” 프로그램에 업로드 적용</p>
      </div>
      <Workbook />
      <Arrows />
    </div>
  );
}
